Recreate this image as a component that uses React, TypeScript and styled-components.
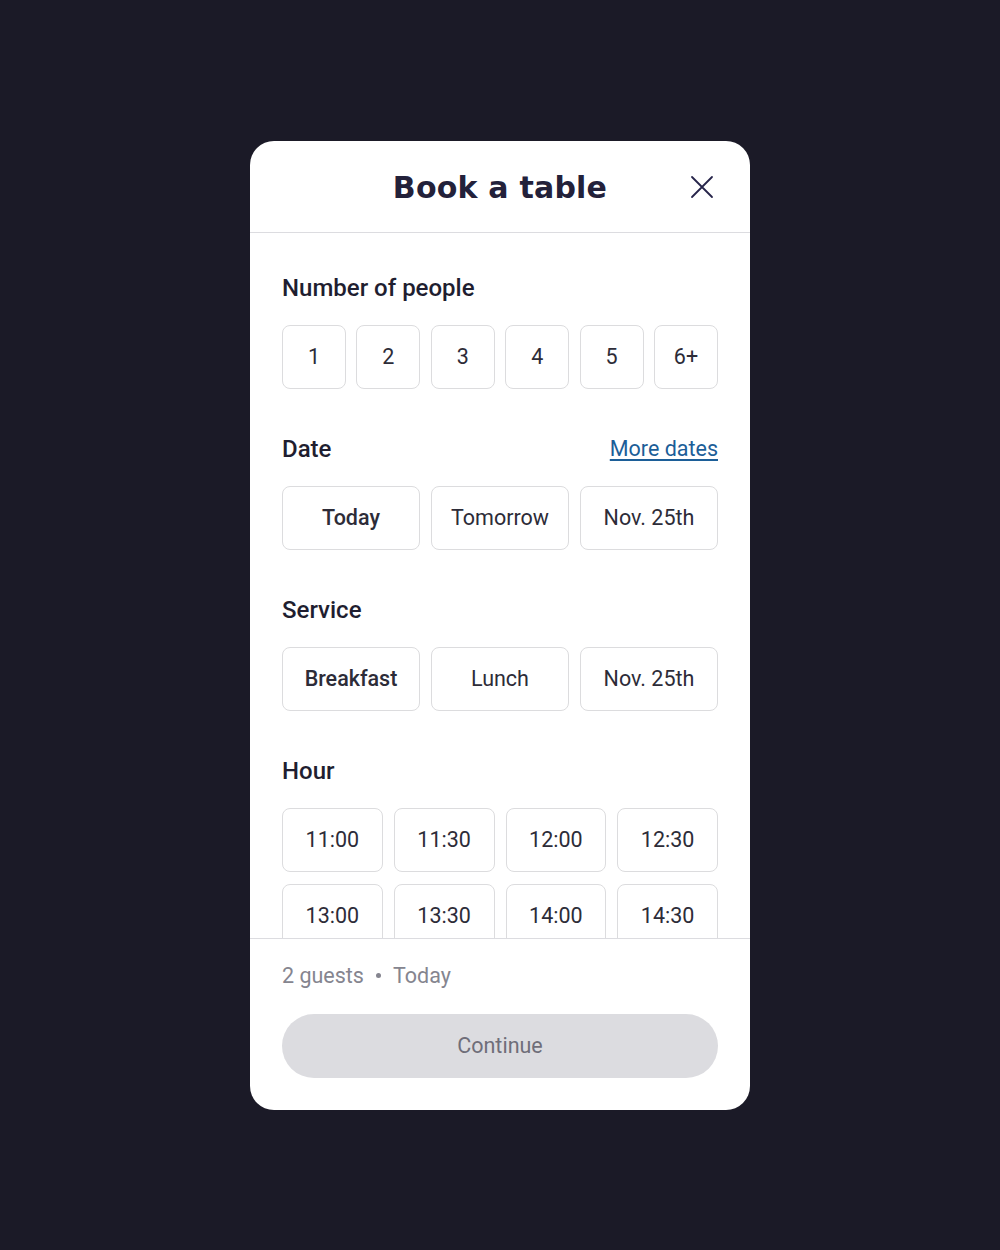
import React, { useState } from "react";
import styled, { createGlobalStyle } from "styled-components";

const GlobalStyle = createGlobalStyle`
  * { box-sizing: border-box; }
  html, body { margin: 0; padding: 0; }
  body {
    background: #1b1a27;
    font-family: Roboto, "Liberation Sans", Arial, sans-serif;
  }
`;

const Page = styled.div`
  min-height: 1250px;
  display: flex;
  align-items: center;
  justify-content: center;
`;

const Modal = styled.div`
  width: 500px;
  height: 969px;
  background: #ffffff;
  border-radius: 24px;
  display: flex;
  flex-direction: column;
  overflow: hidden;
`;

const Header = styled.header`
  position: relative;
  height: 92px;
  flex-shrink: 0;
  display: flex;
  align-items: center;
  justify-content: center;
  padding-top: 3px;
  border-bottom: 1.5px solid #dcdce0;
`;

const Title = styled.h1`
  margin: 0;
  font-family: "DejaVu Sans", "Liberation Sans", sans-serif;
  font-weight: 700;
  font-size: 30px;
  letter-spacing: 0.2px;
  color: #23213a;
`;

const CloseButton = styled.button`
  position: absolute;
  right: 36px;
  top: 34px;
  width: 24px;
  height: 24px;
  padding: 0;
  border: none;
  background: none;
  cursor: pointer;
  display: flex;
  align-items: center;
  justify-content: center;
`;

const Body = styled.div`
  flex: 1;
  overflow: hidden;
  padding: 41px 32px 0;
`;

const Section = styled.section`
  margin-bottom: 46px;
`;

const SectionHead = styled.div`
  display: flex;
  align-items: center;
  justify-content: space-between;
  height: 28px;
  margin-bottom: 23px;
`;

const Label = styled.h2`
  margin: 0;
  font-size: 24px;
  line-height: 28px;
  font-weight: 500;
  color: #1f1e30;
`;

const MoreLink = styled.a`
  font-size: 21.5px;
  line-height: 28px;
  color: #1c5e98;
  text-decoration: underline;
  text-underline-offset: 3px;
  cursor: pointer;
`;

const Grid = styled.div<{ cols: number; gap: number }>`
  display: grid;
  grid-template-columns: repeat(${(p) => p.cols}, 1fr);
  column-gap: ${(p) => p.gap}px;
  row-gap: 12px;
`;

const Choice = styled.button<{ strong?: boolean }>`
  height: 64px;
  border: 1.5px solid #dcdcde;
  border-radius: 8px;
  background: #ffffff;
  font-family: Roboto, "Liberation Sans", Arial, sans-serif;
  font-size: 21.5px;
  font-weight: ${(p) => (p.strong ? 500 : 400)};
  color: #2d2c38;
  cursor: pointer;
  padding: 0;
`;

const Footer = styled.footer`
  flex-shrink: 0;
  border-top: 1.5px solid #dcdce0;
  padding: 23px 32px 32px;
  display: flex;
  flex-direction: column;
  gap: 24px;
`;

const Summary = styled.div`
  font-size: 21.5px;
  line-height: 28px;
  color: #85858f;
  display: flex;
  align-items: center;
  gap: 10px;
`;

const Dot = styled.span`
  width: 5px;
  height: 5px;
  border-radius: 50%;
  background: #85858f;
  margin: 0 2px;
`;

const ContinueButton = styled.button`
  height: 64px;
  border: none;
  border-radius: 32px;
  background: #dcdce0;
  font-family: Roboto, "Liberation Sans", Arial, sans-serif;
  font-size: 21.5px;
  color: #6f6e79;
  cursor: not-allowed;
`;

const people = ["1", "2", "3", "4", "5", "6+"];
const dates = ["Today", "Tomorrow", "Nov. 25th"];
const services = ["Breakfast", "Lunch", "Nov. 25th"];
const hours = [
  "11:00", "11:30", "12:00", "12:30",
  "13:00", "13:30", "14:00", "14:30",
  "15:00", "15:30", "16:00", "16:30",
];

export default function App() {
  const [date, setDate] = useState("Today");
  const [service, setService] = useState("Breakfast");

  return (
    <Page>
      <GlobalStyle />
      <Modal>
        <Header>
          <Title>Book a table</Title>
          <CloseButton aria-label="Close">
            <svg width="24" height="24" viewBox="0 0 24 24" fill="none">
              <path d="M2 2L22 22M22 2L2 22" stroke="#26244a" strokeWidth="1.8" strokeLinecap="round" />
            </svg>
          </CloseButton>
        </Header>

        <Body>
          <Section>
            <SectionHead>
              <Label>Number of people</Label>
            </SectionHead>
            <Grid cols={6} gap={10.4}>
              {people.map((p) => (
                <Choice key={p}>{p}</Choice>
              ))}
            </Grid>
          </Section>

          <Section>
            <SectionHead>
              <Label>Date</Label>
              <MoreLink>More dates</MoreLink>
            </SectionHead>
            <Grid cols={3} gap={11}>
              {dates.map((d) => (
                <Choice key={d} strong={d === date} onClick={() => setDate(d)}>
                  {d}
                </Choice>
              ))}
            </Grid>
          </Section>

          <Section>
            <SectionHead>
              <Label>Service</Label>
            </SectionHead>
            <Grid cols={3} gap={11}>
              {services.map((s, i) => (
                <Choice key={i} strong={s === service} onClick={() => setService(s)}>
                  {s}
                </Choice>
              ))}
            </Grid>
          </Section>

          <Section>
            <SectionHead>
              <Label>Hour</Label>
            </SectionHead>
            <Grid cols={4} gap={11}>
              {hours.map((h) => (
                <Choice key={h}>{h}</Choice>
              ))}
            </Grid>
          </Section>
        </Body>

        <Footer>
          <Summary>
            <span>2 guests</span>
            <Dot />
            <span>Today</span>
          </Summary>
          <ContinueButton disabled>Continue</ContinueButton>
        </Footer>
      </Modal>
    </Page>
  );
}
